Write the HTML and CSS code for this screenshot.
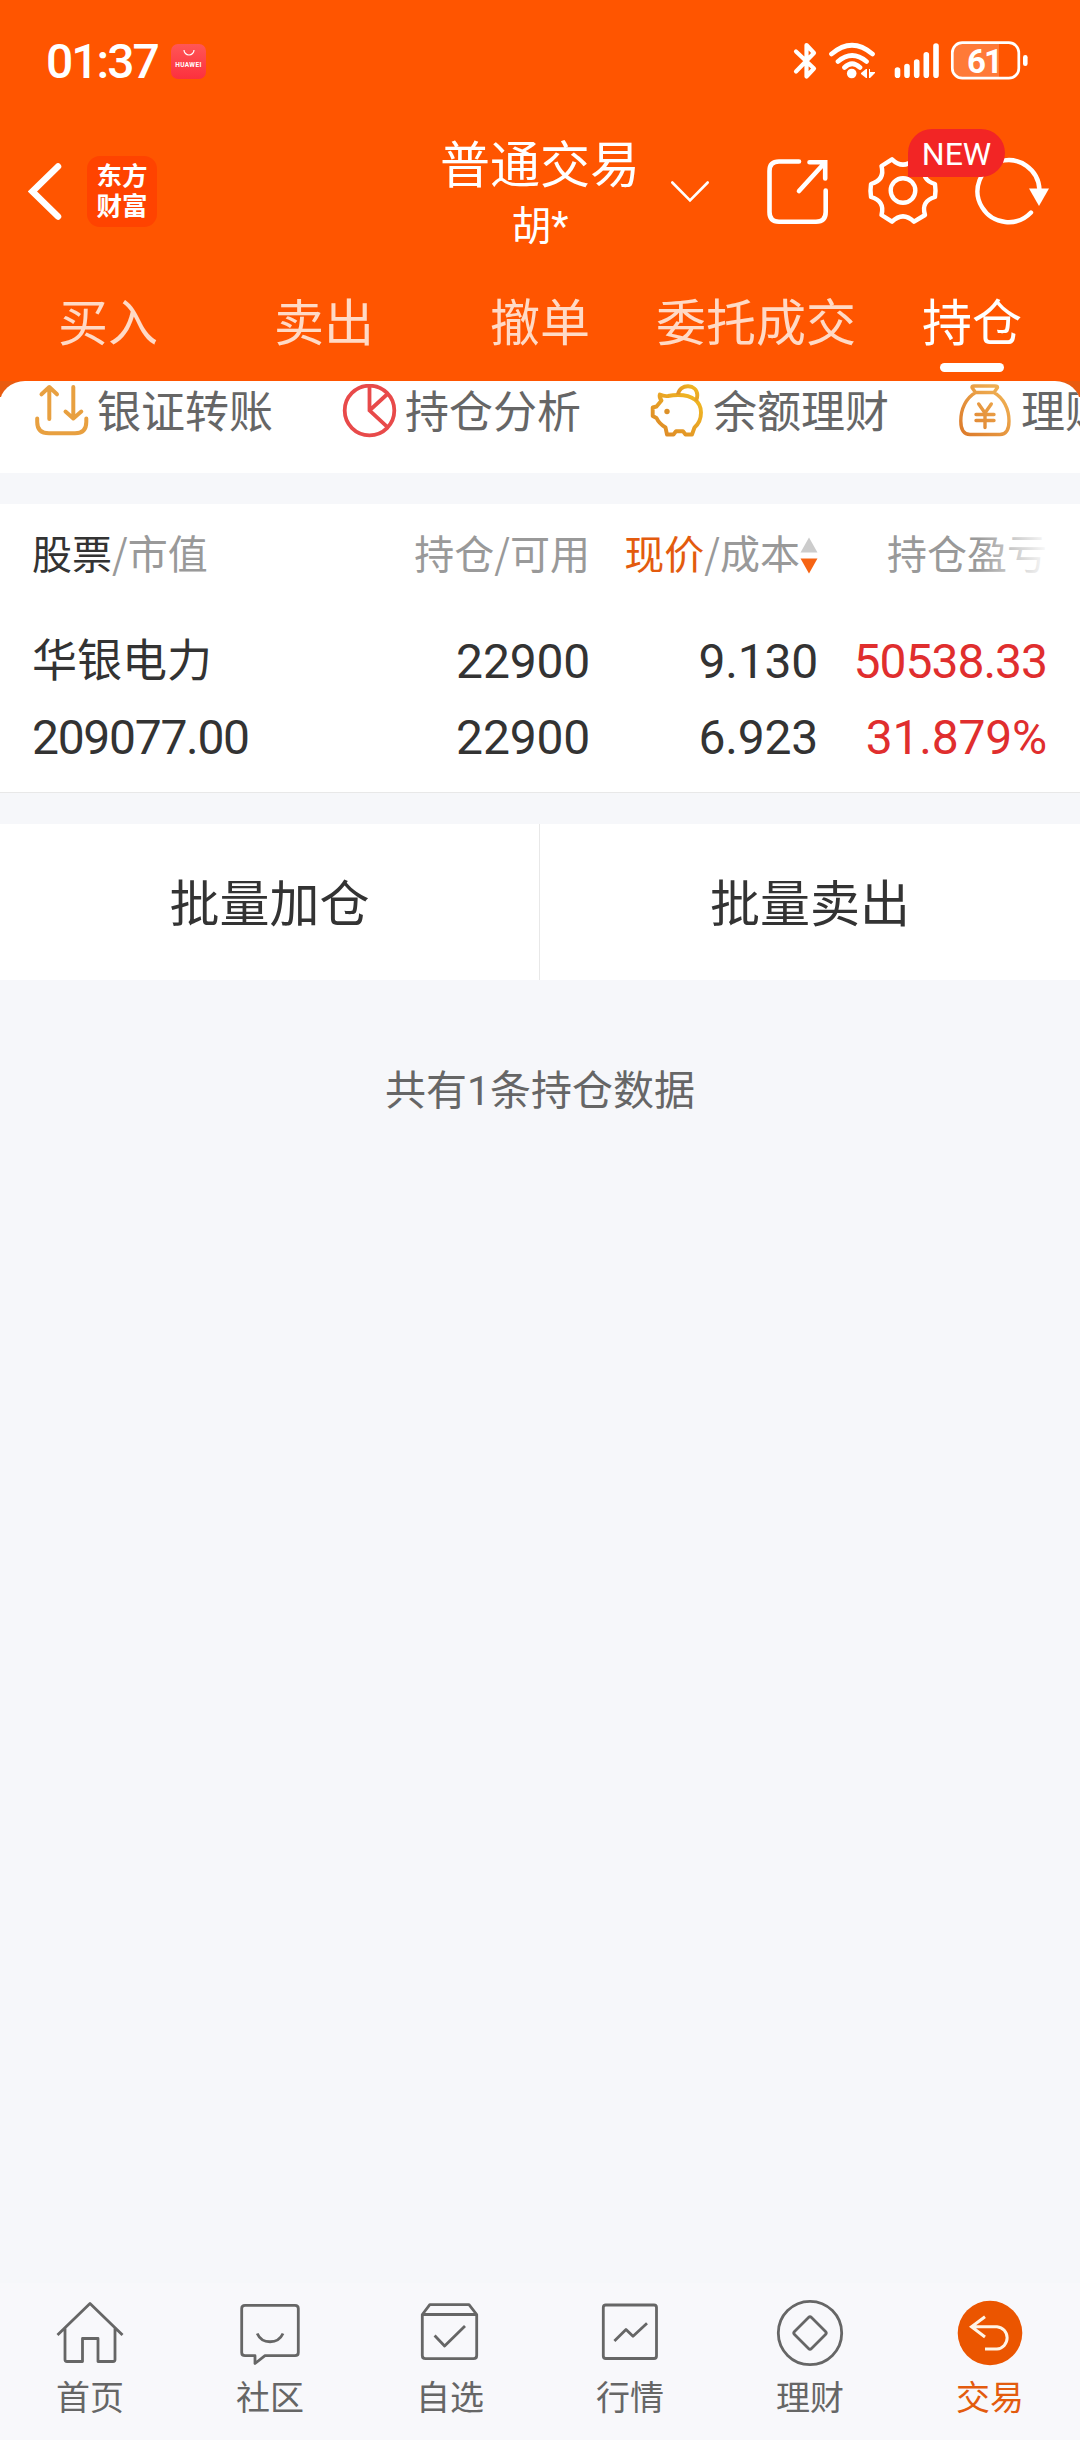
FILE: index.html
```html
<!DOCTYPE html>
<html lang="zh-CN">
<head>
<meta charset="utf-8">
<title>普通交易 - 持仓</title>
<link rel="stylesheet" href="styles.css">
</head>
<body>
<div class="app">
  <header class="top">
    <div class="status">
      <span class="clock">01:37</span>
      <span class="store">
        <svg width="14" height="8" viewBox="0 0 14 8"><path d="M2 1a5 5 0 0 0 10 0" fill="none" stroke="#fff" stroke-width="1.2"/></svg>
        <b>HUAWEI</b>
      </span>
      <svg class="signals" width="240" height="44" viewBox="792 39 240 44" fill="none" stroke="#fff" stroke-linecap="round" stroke-linejoin="round">
        <path d="M796 51.500 814 68.500 806.500 76.500V45L814 53 796 71.500" stroke-width="4.200"/>
        <path d="M831.500 54Q852 36.500 872.500 54M838 61.500Q852 49.500 866.500 61.500M844.500 67.500Q852 60 860 67.500" stroke-width="4.700"/>
        <circle cx="851.700" cy="73.500" r="4.800" fill="#fff" stroke="none"/>
        <path d="M867 69v9h-1l-5-4v-1l5-4ZM869 69h1v3h5v1l-5 5h-1Z" fill="#fff" stroke="none"/>
        <path d="M897.500 70V75.300M907 66.500V75.300M916.700 62V75.300M926.300 54.700V75.300M936 46V75.300" stroke-width="5.600"/>
        <path d="M961 44H999V77H961Q953 77 953 69V52Q953 44 961 44Z" fill="#fff" fill-opacity=".22" stroke="none"/>
        <rect x="952.300" y="42.700" width="66.500" height="35.500" rx="10" stroke-width="2.700"/>
        <rect x="1023" y="55" width="4.600" height="11" rx="2.300" fill="#fff" stroke="none"/>
        <text x="967" y="73" class="battery-text">61</text>
      </svg>
    </div>

    <div class="titlebar">
      <div class="title-left">
        <svg width="34" height="60" viewBox="28 161 34 60" fill="none" stroke="#fff" stroke-width="6.500" stroke-linecap="round" stroke-linejoin="miter"><path d="M58 166.500 32.500 191.500 58 216.500"/></svg>
        <div class="logo">东方<br>财富</div>
      </div>
      <div class="title">
        <h1>普通交易</h1>
        <p>胡*</p>
      </div>
      <div class="title-right">
        <svg class="ico-down" width="40" height="24" viewBox="670 178 40 24" fill="none" stroke="#fff" stroke-width="2.600" stroke-linecap="round"><path d="M672.300 181.500 690 199.300 707.700 181.500"/></svg>
        <svg class="ico-share" width="66" height="70" viewBox="765 156 66 70" fill="none" stroke="#fff" stroke-width="4.600" stroke-linecap="round"><path d="M799 161.500H779Q769.500 161.500 769.500 171V212Q769.500 221.700 779 221.700H816Q825.700 221.700 825.700 212V190.500M809.500 162.300H825.200V178.500M799 191 824.500 163"/></svg>
        <span class="settings">
          <svg width="72" height="70" viewBox="867 156 72 70" fill="none" stroke="#fff" stroke-width="4.400" stroke-linejoin="round"><path d="M892 159.300Q903 170 914 159.300L925 166C922 175.500 926 181.500 935 184Q936 190.500 935 197C926 199.500 922 205.500 925 215L914 221.700Q903 211 892 221.700L881.500 215C884 205.500 880 199.500 871 197Q870 190.500 871 184C880 181.500 884 175.500 881.500 166Z"/><circle cx="903" cy="190.500" r="12.300"/></svg>
          <em>NEW</em>
        </span>
        <svg class="ico-refresh" width="78" height="70" viewBox="974 156 78 70" fill="none" stroke="#fff" stroke-width="4.400"><path d="M1031 212.500A31 31 0 1 1 1039.500 190" stroke-linecap="round"/><path d="M1029 188.500H1049L1039 206Z" fill="#fff" stroke="none"/></svg>
      </div>
    </div>

    <nav class="tabs">
      <a>买入</a><a>卖出</a><a>撤单</a><a>委托成交</a><a class="on">持仓</a>
    </nav>
  </header>

  <section class="quick-wrap">
    <div class="quick">
      <a><svg width="56" height="54" viewBox="0 0 56 54" fill="none" stroke="#e8a040" stroke-width="4" stroke-linecap="round" stroke-linejoin="round"><path d="M15.300 35V3.500M7.500 10.300 15.300 3 23 10.300M39.300 3V34M31.500 27.500 39.300 34.500 47.300 27.500M3.200 34.500V38Q3.200 49.300 15 49.300H41Q52.300 49.300 52.300 38V34.500"/></svg><span>银证转账</span></a>
      <a><svg width="56" height="54" viewBox="0 0 56 54" fill="none" stroke="#e84a4a" stroke-width="3.800"><circle cx="27.500" cy="26.500" r="24.800"/><path d="M27.500 2V26.500L45.500 43.200M27.500 26.500 46 9.500"/></svg><span>持仓分析</span></a>
      <a><svg width="56" height="54" viewBox="0 0 56 54" fill="none" stroke="url(#pig)" stroke-width="3.900" stroke-linejoin="round"><defs><linearGradient id="pig" x1="0" y1="1" x2="1" y2="0"><stop offset="0" stop-color="#dc8628"/><stop offset="1" stop-color="#f2bb22"/></linearGradient></defs><path d="M9.800 10.500Q14 12.500 18 12Q23 11 28 11C43 11 51 18 51 28.500C51 36 48 40.500 44.500 43.500L42 50.500H35.500L33 47.300H26L23.500 50.500H17L15.500 43.500Q9 39.500 6.500 34L2.700 32V23.500L6.500 22.500L11.500 16.500Q9 13 9.800 10.500Z"/><path d="M28 10.500C30 -1 47 0 47.300 11Q47.400 14 46 17"/><circle cx="17" cy="27.500" r="2.700" fill="#dc9028" stroke="none"/></svg><span>余额理财</span></a>
      <a><svg width="56" height="54" viewBox="0 0 56 54" fill="none" stroke="url(#bag)" stroke-width="3.400" stroke-linecap="round" stroke-linejoin="round"><defs><linearGradient id="bag" x1="0" y1="1" x2="1" y2="0"><stop offset="0" stop-color="#dc7a2a"/><stop offset="1" stop-color="#f2b758"/></linearGradient></defs><path d="M17.500 8.500 14 3.500Q14 2 16 2H37Q39.500 2 39.500 3.500L36 8.500ZM17.500 8.500C8 14 2.800 25 2.800 37Q2.800 50.500 12 50.500H42Q51 50.500 51 37C51 25 45.500 14 36 8.500M20.700 20 27 29 33.300 20M27 29V43.500M18 30.500H36M18 36.500H36"/></svg><span>理财</span></a>
    </div>
  </section>

  <section class="holdings">
    <div class="row head">
      <span><b>股票</b>/市值</span>
      <span>持仓/可用</span>
      <span class="sorted"><b>现价</b>/成本<svg width="18" height="38" viewBox="0 0 18 38"><path d="M9 1.500 17.500 16.500H.500Z" fill="#ccc"/><path d="M.500 22.500H17.500L9 37.500Z" fill="#f66414"/></svg></span>
      <span class="fade">持仓盈亏</span>
    </div>
    <div class="row line1">
      <span class="name">华银电力</span><span>22900</span><span>9.130</span><span class="red">50538.33</span>
    </div>
    <div class="row line2">
      <span class="value">209077.00</span><span>22900</span><span>6.923</span><span class="red pct">31.879%</span>
    </div>
  </section>

  <section class="batch"><button>批量加仓</button><button>批量卖出</button></section>
  <p class="count">共有1条持仓数据</p>

  <nav class="bottom">
    <a><svg viewBox="0 0 72 72"><path d="M3.500 39 36 7.500 68.500 39M11 32V63.500Q11 65.500 13 65.500H28.500V42.500H44V65.500H59Q61 65.500 61 63.500V32"/></svg>首页</a>
    <a><svg viewBox="0 0 72 72"><path d="M11 9.300H61Q64.300 9.300 64.300 12.500V56.500Q64.300 59.700 61 59.700H31L21 67.500V59.700H11Q7.700 59.700 7.700 56.500V12.500Q7.700 9.300 11 9.300Z"/><path d="M23.200 37.500C28 48.500 44 48.500 49 37.500"/></svg>社区</a>
    <a><svg viewBox="0 0 72 72"><path d="M8.300 18.500 15.800 8.700H55L62.700 18.500V59.500Q62.700 62.700 59.500 62.700H11.500Q8.300 62.700 8.300 59.500ZM8.300 18.500H62.700M20.600 39.500 30.600 50 51 30"/></svg>自选</a>
    <a><svg viewBox="0 0 72 72"><rect x="9.300" y="9" width="53.200" height="53.500" rx="2.500"/><path d="M20.400 45 32 33.500 39 40.300 53 27.300"/></svg>行情</a>
    <a><svg viewBox="0 0 72 72"><circle cx="36" cy="37" r="31.700"/><path d="M34.500 21.500Q36 20 37.500 21.500L51.500 35.500Q53 37 51.500 38.500L37.500 52.500Q36 54 34.500 52.500L20.500 38.500Q19 37 20.500 35.500Z"/></svg>理财</a>
    <a class="on"><svg viewBox="0 0 72 72"><circle cx="36" cy="37" r="32.300"/><path d="M31 20.700 17.500 30.700 31 41M18 30.700H43A11.200 11.200 0 0 1 43 53H31"/></svg>交易</a>
  </nav>
</div>
</body>
</html>
```

FILE: styles.css
```css
* { box-sizing: border-box; margin: 0; padding: 0; }
body {
  width: 1080px;
  background: #f6f7fa;
  font-family: Roboto, "Noto Sans CJK SC", sans-serif;
  color: #333;
}
svg { display: block; flex: none; }
h1, b, em { font-weight: 400; font-style: normal; }
.app { display: flex; flex-direction: column; height: 2440px; overflow: hidden; }

/* orange header */
.top { height: 381px; background: #ff5500; color: #fff; }
.status { display: flex; align-items: center; height: 122px; padding: 0 48px 0 46px; }
.clock { width: 125px; padding-top: 2px; font-size: 48px; font-weight: 500; letter-spacing: -2px; line-height: 60px; }
.store {
  display: flex; flex-direction: column; align-items: center;
  width: 35px; height: 35px; padding-top: 5px; border-radius: 7px;
  background: linear-gradient(#ff5656, #fc303e);
}
.store b { font-size: 6.500px; line-height: 8px; margin-top: 4px; font-weight: 700; letter-spacing: .4px; }
.signals { margin-left: auto; }
.battery-text { font-size: 33px; font-weight: 700; letter-spacing: -2px; fill: #fff; stroke: none; }

.titlebar { display: grid; grid-template-columns: 440px 200px 440px; height: 138px; align-items: center; }
.title-left { display: flex; align-items: center; padding-left: 28px; gap: 25px; }
.logo {
  width: 70px; height: 71px; padding-top: 5px; border-radius: 13px; background: #ff4300;
  font-size: 25.500px; font-weight: 700; line-height: 30px; text-align: center;
}
.title { text-align: center; padding-top: 7px; }
.title h1 { font-size: 50px; line-height: 64px; }
.title p { font-size: 40px; line-height: 58px; }
.title-right { display: flex; align-items: center; padding-left: 30px; }
.ico-share { margin-left: 55px; }
.settings { position: relative; margin-left: 36px; z-index: 1; }
.settings em {
  position: absolute; left: 41px; top: -27px; width: 97px; height: 48px;
  border-radius: 24px 24px 24px 0; background: #f22525;
  font-size: 32px; line-height: 50px; text-align: center;
}
.ico-refresh { margin-left: 35px; }

.tabs { display: grid; grid-template-columns: repeat(5, 216px); height: 121px; }
.tabs a {
  display: flex; flex-direction: column; align-items: center;
  padding-top: 34px; font-size: 50px; line-height: 60px; color: #ffdac6;
}
.tabs .on { color: #fff; }
.tabs .on::after { content: ""; width: 64px; height: 9px; margin-top: 9px; border-radius: 5px; background: #fff; }

/* shortcut strip, continues past the right edge */
.quick-wrap { height: 92px; background: linear-gradient(#e95b10 16px, #fff 16px); }
.quick {
  display: flex; gap: 76px; height: 92px; padding: 3px 0 0 34px; overflow: hidden;
  border-radius: 25px 25px 0 0 / 22px 22px 0 0; background: #fff;
}
.quick a {
  display: flex; flex: none; align-items: flex-start; gap: 7px; width: 232px;
  font-size: 44px; line-height: 54px; color: #666; white-space: nowrap;
}
.quick a > svg { width: 56px; }
.quick span { padding-top: 2px; }

/* holdings table */
.holdings { height: 289px; margin-top: 31px; background: #fff; border-bottom: 1px solid #e8e8e8; }
.row { display: grid; grid-template-columns: 358px 200px 228px 229px; padding-left: 32px; text-align: right; font-size: 48px; }
.row > :first-child { text-align: left; }
.head { height: 100px; line-height: 96px; font-size: 40px; color: #999; font-family: "Noto Sans CJK SC", sans-serif; }
.head b { color: #333; }
.sorted { display: flex; align-items: center; justify-content: flex-end; height: 96px; }
.head .sorted b { color: #e35b0e; }
.sorted svg { margin-top: 6px; }
.fade { position: relative; }
.fade::after {
  content: ""; position: absolute; top: 0; right: 0; width: 70px; height: 100px;
  background: linear-gradient(90deg, rgba(255, 255, 255, 0), rgba(255, 255, 255, .95));
}
.line1, .line2 { height: 76px; line-height: 78px; letter-spacing: -.2px; }
.line1 { margin-top: 19px; }
.name { font-size: 45px; letter-spacing: 0; line-height: 77px; }
.value { letter-spacing: -1.300px; line-height: 77px; }
.red { color: #e02e2e; letter-spacing: -1px; }
.pct { letter-spacing: -.200px; }

.batch { display: grid; grid-template-columns: 539px 541px; height: 156px; margin-top: 31px; background: #fff; }
.batch button { padding-bottom: 5px; border: 0; background: none; font: 50px/1 "Noto Sans CJK SC", sans-serif; color: #333; }
.batch button + button { border-left: 1px solid #e8e8e8; }
.count { margin-top: 81px; font-size: 41px; line-height: 60px; text-align: center; color: #666; }

/* bottom navigation */
.bottom {
  display: grid; grid-template-columns: repeat(6, 180px); height: 157px; margin-top: auto;
  padding-top: 13px; background: #f8f8fb;
}
.bottom a { display: flex; flex-direction: column; align-items: center; font-size: 34px; line-height: 61px; color: #666; }
.bottom svg { width: 72px; height: 72px; fill: none; stroke: #666; stroke-width: 2.800; stroke-linejoin: round; }
.bottom .on { color: #e35b0e; }
.bottom .on circle { fill: #eb5500; stroke: none; }
.bottom .on path { stroke: #fff4e6; stroke-width: 3; stroke-linejoin: miter; }
```
